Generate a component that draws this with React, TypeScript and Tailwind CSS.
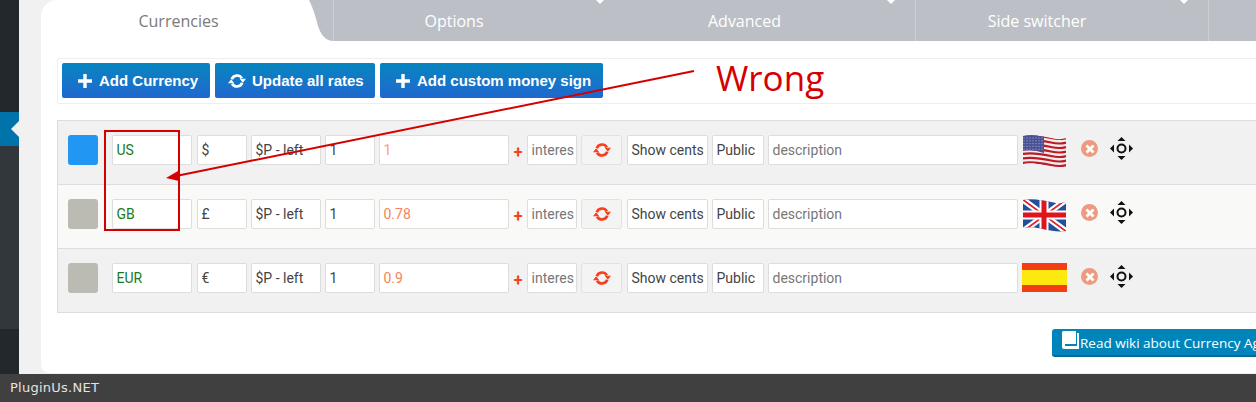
const FONT = "font-['Roboto',sans-serif]";

const stripes = [0, 1, 2, 3, 4, 5, 6, 7, 8, 9, 10, 11, 12];
const dots = [0, 1, 2, 3, 4, 5, 6];

function UsFlag() {
  return (
    <svg width="45" height="33" viewBox="0 0 45 33">
      <defs>
        <clipPath id="wave-us">
          <path d="M1 1 C10 -1 20 1 29 3 S40 4 44 3 V32 C36 33 30 32 21 30 S7 28 1 29 Z" />
        </clipPath>
      </defs>
      <g clipPath="url(#wave-us)">
        <rect width="45" height="33" fill="#f3ecec" />
        {stripes.filter((i) => i % 2 === 0).map((i) => (
          <path
            key={i}
            d={`M0 ${1 + i * 2.25} C10 ${-1 + i * 2.25} 20 ${1 + i * 2.25} 29 ${3 + i * 2.25} S40 ${4 + i * 2.25} 45 ${3 + i * 2.25}`}
            stroke="#bb1a26"
            strokeWidth="2.2"
            fill="none"
          />
        ))}
        <path d="M0 0 H22 V18 C14 15 7 15 0 16 Z" fill="#4a5296" />
        {dots.map((x) =>
          dots.slice(0, 5).map((y) => (
            <rect key={`${x}-${y}`} x={1.5 + x * 3} y={2.5 + y * 2.8} width="1" height="1" fill="#aab0d8" />
          )),
        )}
      </g>
    </svg>
  );
}

function GbFlag() {
  return (
    <svg width="45" height="33" viewBox="0 0 45 33">
      <defs>
        <clipPath id="wave-gb">
          <path d="M1 1 C10 -1 20 1 29 3 S40 4 44 3 V32 C36 33 30 32 21 30 S7 28 1 29 Z" />
        </clipPath>
      </defs>
      <g clipPath="url(#wave-gb)">
        <rect width="45" height="33" fill="#22509c" />
        <path d="M0 0 L45 33 M45 0 L0 33" stroke="#fff" strokeWidth="6" />
        <path d="M0 0 L45 33 M45 0 L0 33" stroke="#d8232a" strokeWidth="1.8" />
        <path d="M22 0 V33 M0 16 H45" stroke="#fff" strokeWidth="9" />
        <path d="M22 0 V33 M0 16 H45" stroke="#e0141c" strokeWidth="5" />
      </g>
    </svg>
  );
}

function EsFlag() {
  return (
    <div className="flex flex-col w-[45px] h-[29px]">
      <div className="h-[7px] bg-[#f53c14]" />
      <div className="h-[15px] bg-[#fde910]" />
      <div className="h-[7px] bg-[#f53c14]" />
    </div>
  );
}

function SyncIcon({ size, className }: { size: number; className: string }) {
  return (
    <svg width={size} height={size} viewBox="0 0 20 20" className={className} fill="currentColor">
      <path d="M4.2 8 A6.2 6.2 0 0 1 15.4 7" fill="none" stroke="currentColor" strokeWidth="3" />
      <path d="M15.8 12 A6.2 6.2 0 0 1 4.6 13" fill="none" stroke="currentColor" strokeWidth="3" />
      <path d="M13 7.5 H20 L16.5 12 Z M0 12.5 H7 L3.5 8 Z" />
    </svg>
  );
}

function PlusIcon() {
  return (
    <svg width="14" height="14" viewBox="0 0 14 14" fill="#fff" className="shrink-0">
      <path d="M5.3 0 H8.7 V5.3 H14 V8.7 H8.7 V14 H5.3 V8.7 H0 V5.3 H5.3 Z" />
    </svg>
  );
}

function BookIcon() {
  return (
    <svg width="17" height="18" viewBox="0 0 17 18" className="shrink-0 -mt-[6px]">
      <path d="M1.5 0 H14 V13 H3 V15 H15 V2 H17 V18 H2 Q0 18 0 16 V1.5 Q0 0 1.5 0 Z" fill="#fff" />
    </svg>
  );
}

function MoveIcon() {
  return (
    <svg width="23" height="23" viewBox="0 0 23 23" fill="#111">
      <path d="M11.5 0 L15.5 4 H7.5 Z M11.5 23 L7.5 19 H15.5 Z M0 11.5 L4 7.5 V15.5 Z M23 11.5 L19 15.5 V7.5 Z" />
      <circle cx="11.5" cy="11.5" r="4" fill="none" stroke="#111" strokeWidth="2" />
    </svg>
  );
}

function CloseIcon() {
  return (
    <div className="flex items-center justify-center w-[17px] h-[17px] rounded-full bg-[#ec9b80]">
      <svg width="10" height="10" viewBox="0 0 10 10">
        <path d="M1.5 1.5 L8.5 8.5 M8.5 1.5 L1.5 8.5" stroke="#fff" strokeWidth="2.8" />
      </svg>
    </div>
  );
}

function Field({ w, className, children }: { w: string; className: string; children: string }) {
  return (
    <div className={`${w} ${className} h-[30px] flex items-center bg-white border border-[#dddddd] rounded-[2px] px-[3.5px] text-[14px] overflow-hidden whitespace-nowrap`}>
      {children}
    </div>
  );
}

const rows = [
  { code: "US", sign: "$", rate: "1", swatch: "bg-[#2196f3]", bg: "bg-[#f1f1f1]", flag: <UsFlag />, rateColor: "text-[#ff9a80]" },
  { code: "GB", sign: "£", rate: "0.78", swatch: "bg-[#bcbbb3]", bg: "bg-[#f9f9f8]", flag: <GbFlag />, rateColor: "text-[#f5845c]" },
  { code: "EUR", sign: "€", rate: "0.9", swatch: "bg-[#bcbbb3]", bg: "bg-[#f1f1f1]", flag: <EsFlag />, rateColor: "text-[#f5845c]" },
];

function CurrencyRow({ row, last }: { row: (typeof rows)[number]; last: boolean }) {
  return (
    <div className={`${row.bg} ${last ? "h-[63px]" : "h-[64px] border-b border-[#dddddd]"} flex items-start pl-[10px] pt-[14px]`}>
      <div className={`${row.swatch} w-[30px] h-[30px] rounded-[3px] shrink-0`} />
      <div className="flex items-center ml-[14px] gap-[4px] shrink-0">
        <Field w="w-[80px]" className="text-[#1a7a1a] mr-[1px]">{row.code}</Field>
        <Field w="w-[50px]" className="text-[#444444]">{row.sign}</Field>
        <Field w="w-[70px]" className="text-[#444444]">$P - left</Field>
        <Field w="w-[50px]" className="text-[#444444]">1</Field>
        <Field w="w-[130px]" className={row.rateColor}>{row.rate}</Field>
        <span className="w-[10px] text-center text-[#f4411e] text-[16px] font-bold leading-none pt-[5px]">+</span>
        <Field w="w-[50px]" className="text-[#777777]">interes</Field>
        <div className="w-[41px] h-[30px] flex items-center justify-center bg-[#f4f4f4] border border-[#e2e2e2] rounded-[3px]">
          <SyncIcon size={18} className="text-[#f4411e]" />
        </div>
        <Field w="w-[81px]" className="text-[#444444] ml-[1px]">Show cents</Field>
        <Field w="w-[52px]" className="text-[#444444]">Public</Field>
        <Field w="w-[250px]" className="text-[#777777]">description</Field>
      </div>
      <div className="w-[45px] ml-[4px] shrink-0">{row.flag}</div>
      <div className="ml-[14px] mt-[5px] shrink-0"><CloseIcon /></div>
      <div className="ml-[12px] mt-[2px] shrink-0"><MoveIcon /></div>
    </div>
  );
}

function Tab({ w, label, line }: { w: string; label: string; line: boolean }) {
  return (
    <div className={`${w} ${line ? "border-l border-[#ccd0d4]" : ""} relative shrink-0 h-[41px] flex items-center justify-center pr-[50px] text-[16px] text-white font-['Open_Sans',sans-serif]`}>
      {label}
      <span className="absolute right-[20px] top-0 w-0 h-0 border-x-[4px] border-x-transparent border-t-[4px] border-t-white" />
    </div>
  );
}

const actionBtn = "h-[35px] flex items-center pt-[1px] rounded-[2px] text-white font-bold text-[15px] bg-gradient-to-b from-[#0585bf] to-[#1f67cf] font-['Liberation_Sans',sans-serif] whitespace-nowrap";

export default function App() {
  return (
    <div className={`${FONT} relative w-[1256px] h-[402px] overflow-hidden flex flex-col bg-[#f1f1f1]`}>
      <div className="flex-1 flex min-h-0">
        <div className="w-[19px] shrink-0 flex flex-col bg-[#23282d]">
          <div className="h-[112px]" />
          <div className="h-[34px] bg-[#0073aa] relative">
            <span className="absolute left-[11px] top-[9px] w-0 h-0 border-y-[8px] border-y-transparent border-r-[8px] border-r-[#f1f1f1]" />
          </div>
          <div className="h-[183px] bg-[#32373c]" />
        </div>
        <div className="w-[22px] shrink-0" />
        <div className="flex-1 min-w-0 mb-[1px] bg-white rounded-tl-[16px] rounded-bl-[8px] flex flex-col overflow-hidden">
          <div className="h-[41px] flex shrink-0">
            <div className="w-[268px] shrink-0 flex items-center justify-center pl-[7px] text-[16px] text-[#7a7a7a] font-['Open_Sans',sans-serif]">Currencies</div>
            <svg width="24" height="41" viewBox="0 0 24 41" className="shrink-0">
              <path d="M0 0 C4 8 7 18 9 26 C12 36 18 41 24 41 L24 0 Z" fill="#bcc0c6" />
            </svg>
            <div className="flex-1 flex bg-[#bcc0c6] min-w-0">
              <Tab w="w-[291px]" label="Options" line />
              <Tab w="w-[291px]" label="Advanced" line={false} />
              <Tab w="w-[293px]" label="Side switcher" line />
              <div className="flex-1 border-l border-[#ccd0d4]" />
            </div>
          </div>
          <div className="ml-[16px] mt-[17px] h-[46px] border border-r-0 border-[#eeeeee] rounded-l-[2px] flex items-start pt-[4px] pl-[4px] gap-[5px]">
            <div className={`${actionBtn} w-[148px] pl-[16px] gap-[7px]`}><PlusIcon />Add Currency</div>
            <div className={`${actionBtn} w-[160px] pl-[13px] gap-[6px]`}><SyncIcon size={18} className="text-white" />Update all rates</div>
            <div className={`${actionBtn} w-[223px] pl-[16px] gap-[7px]`}><PlusIcon />Add custom money sign</div>
          </div>
          <div className="ml-[16px] mt-[16px] border border-r-0 border-[#dddddd]">
            {rows.map((row, i) => (
              <CurrencyRow key={row.code} row={row} last={i === rows.length - 1} />
            ))}
          </div>
          <div className="flex mt-[16px] ml-[1011px]">
            <div className="h-[28px] w-[300px] shrink-0 flex items-center gap-[1px] pl-[10px] pt-[2px] bg-[#0085ba] border-b-2 border-[#006799] rounded-[3px] text-white text-[13.5px] font-['Open_Sans',sans-serif] whitespace-nowrap">
              <BookIcon />
              Read wiki about Currency Aggregators
            </div>
          </div>
        </div>
      </div>
      <div className="h-[28px] shrink-0 bg-[#404040] flex items-center pl-[10px] text-[13px] tracking-[0.25px] text-[#e4e4e4] font-['DejaVu_Sans',sans-serif]">
        PluginUs.NET
      </div>

      {/* red markup drawn over the screenshot */}
      <svg width="1256" height="402" className="absolute left-0 top-0 pointer-events-none">
        <rect x="105" y="131" width="74" height="99" fill="none" stroke="#d40000" strokeWidth="2" />
        <path d="M694 71 L176 176" stroke="#d40000" strokeWidth="2" />
        <path d="M166 178 L178 171 L179 181 Z" fill="#d40000" />
      </svg>
      <span className="absolute left-[716px] top-[56px] text-[35px] leading-[44px] text-[#d40000] font-['Open_Sans',sans-serif]">Wrong</span>
    </div>
  );
}
